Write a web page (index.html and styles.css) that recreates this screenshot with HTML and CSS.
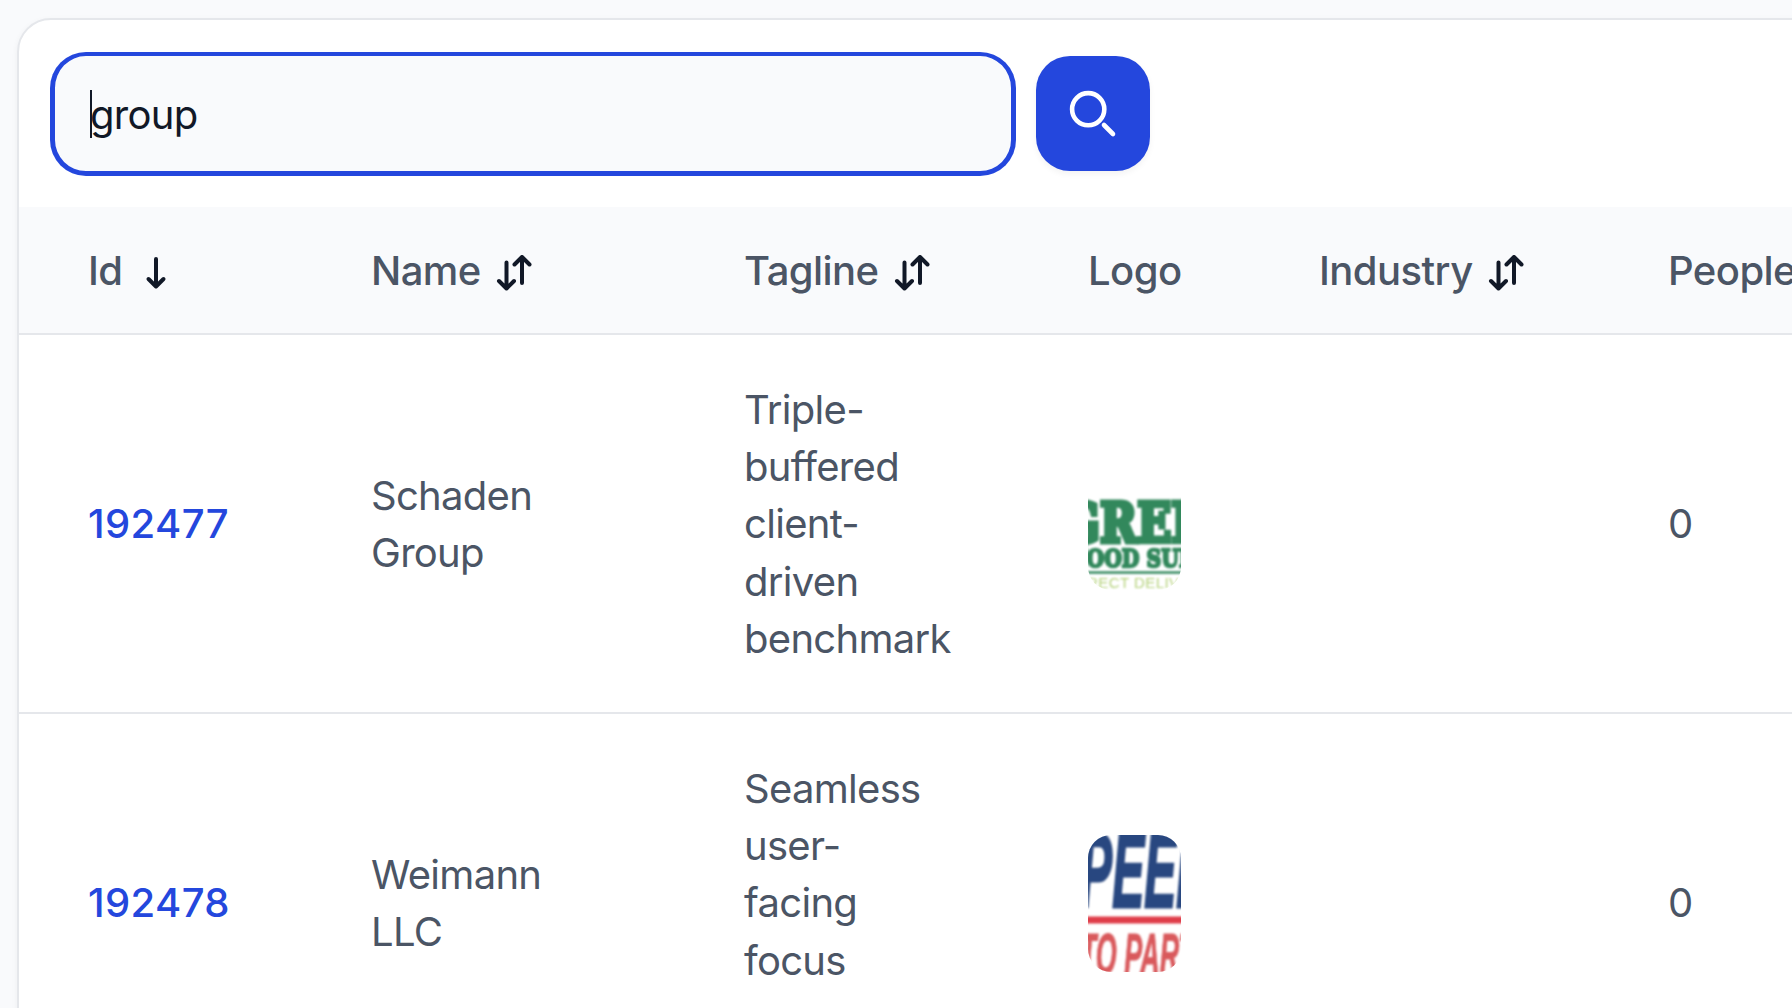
FILE: index.html
```
<!DOCTYPE html>
<html lang="en">
<head>
	<meta charset="UTF-8">
	<meta name="viewport" content="width=device-width, initial-scale=1.0">
	<title>Companies</title>
	<link rel="stylesheet" href="styles.css">
</head>
<body>
	<svg class="sprite" width="0" height="0">
		<symbol id="sort" viewBox="0 0 36 36">
			<path d="M10.500 7.500v26M3 26l7.500 7.500L18 26M26 28V2M18.500 9.500L26 2l7.500 7.500"/>
		</symbol>
		<symbol id="down" viewBox="0 0 36 36">
			<path d="M18 4v27M10.500 24l7.500 7.500 7.500-7.500"/>
		</symbol>
	</svg>

	<div class="card">
		<form class="search">
			<div class="field"><span class="caret"></span>group</div>
			<button class="search-btn" type="button" aria-label="Search">
				<svg viewBox="0 0 48 48" width="48" height="48">
					<circle cx="19.200" cy="19.200" r="16.100"/>
					<path d="M35 35l9 9"/>
				</svg>
			</button>
		</form>

		<table class="companies">
			<colgroup>
				<col class="col-id">
				<col class="col-name">
				<col class="col-tagline">
				<col class="col-logo">
				<col class="col-industry">
				<col class="col-people">
			</colgroup>
			<thead>
				<tr>
					<th><div class="head">Id <svg class="icon"><use href="#down"/></svg></div></th>
					<th><div class="head">Name <svg class="icon"><use href="#sort"/></svg></div></th>
					<th><div class="head">Tagline <svg class="icon"><use href="#sort"/></svg></div></th>
					<th><div class="head">Logo</div></th>
					<th><div class="head">Industry <svg class="icon"><use href="#sort"/></svg></div></th>
					<th><div class="head">People</div></th>
				</tr>
			</thead>
			<tbody>
				<tr>
					<td><a class="link" href="#">192477</a></td>
					<td>Schaden<br>Group</td>
					<td>Triple-<br>buffered<br>client-<br>driven<br>benchmark</td>
					<td>
						<svg class="logo" viewBox="0 0 93 132" width="93" height="132">
							<g class="green">
								<text class="slab" x="-26" y="83.500" font-size="54" textLength="184" lengthAdjust="spacingAndGlyphs">GREEN</text>
								<text class="slab small" x="-16" y="108.500" font-size="25" textLength="165" lengthAdjust="spacingAndGlyphs">FOOD SUPPLY</text>
								<path class="rule" d="M-5 114.500h103"/>
							</g>
							<text class="lime" x="-17" y="130" font-size="15" textLength="140">DIRECT DELIVERY</text>
						</svg>
					</td>
					<td></td>
					<td>0</td>
				</tr>
				<tr>
					<td><a class="link" href="#">192478</a></td>
					<td>Weimann<br>LLC</td>
					<td>Seamless<br>user-<br>facing<br>focus<br>&nbsp;</td>
					<td>
						<svg class="logo" viewBox="0 0 93 137" width="93" height="137">
							<text class="navy" x="-40" y="71.500" font-size="106" textLength="163" lengthAdjust="spacingAndGlyphs">SPEED</text>
							<path class="stripe" d="M-5 85h103"/>
							<text class="red" x="-47" y="139" font-size="57" textLength="172" lengthAdjust="spacingAndGlyphs">AUTO PARTS</text>
						</svg>
					</td>
					<td></td>
					<td>0</td>
				</tr>
			</tbody>
		</table>
	</div>
</body>
</html>
```
FILE: styles.css
```
* {
	box-sizing: border-box;
	padding: 0;
	margin: 0;
}

body {
	height: 1008px;
	overflow: hidden;
	background: #f9fafc;
	color: #4b5565;
	font-family: Inter, sans-serif;
	font-size: 40px;
	line-height: 57.200px;
	letter-spacing: -0.7px;
}

.sprite {
	position: absolute;
}

.card {
	width: 2100px;
	height: 1100px;
	margin: 18px 0 0 17px;
	border: 2px solid #e5e7eb;
	border-radius: 34px;
	background: #fff;
	box-shadow: 0 2px 6px rgba(0, 0, 0, 0.05);
	overflow: hidden;
}

.search {
	display: flex;
	align-items: center;
	gap: 22px;
	height: 187px;
	padding: 0 0 0 33px;
}

.field {
	display: flex;
	align-items: center;
	width: 962px;
	height: 120px;
	padding: 4px 0 0 35px;
	border: 2px solid #2447dd;
	border-width: 2px 3px 3px;
	border-radius: 34px;
	background: #f9fafc;
	box-shadow: 0 0 0 2px #2447dd;
	color: #111827;
}

.caret {
	width: 2px;
	height: 48px;
	margin: -3px -2px 0 0;
	background: #111827;
}

.search-btn {
	display: grid;
	place-items: center;
	width: 114px;
	height: 115px;
	border: 0;
	border-radius: 34px;
	background: #2447dd;
	box-shadow: 0 3px 6px rgba(0, 0, 0, 0.05);
}

.search-btn svg {
	fill: none;
	stroke: #fff;
	stroke-width: 4.6;
	stroke-linecap: round;
}

.companies {
	width: 2090px;
	table-layout: fixed;
	border-collapse: separate;
	border-spacing: 0;
}

.col-id { width: 283px; }
.col-name { width: 373px; }
.col-tagline { width: 344px; }
.col-logo { width: 231px; }
.col-industry { width: 349px; }

th {
	height: 128px;
	padding: 2px 0 0 69px;
	border-bottom: 2px solid #e5e7eb;
	background: #f9fafc;
	font-weight: 500;
	text-align: left;
	letter-spacing: -0.55px;
}

td {
	height: 379px;
	padding: 1px 0 0 69px;
	border-bottom: 2px solid #e5e7eb;
	vertical-align: middle;
}

.head {
	display: flex;
	align-items: center;
	gap: 15px;
}

.icon {
	width: 36px;
	height: 36px;
	margin-top: 5px;
	fill: none;
	stroke: #111827;
	stroke-width: 4;
	stroke-linecap: round;
	stroke-linejoin: round;
}

.link {
	color: #2447dd;
	font-weight: 500;
	letter-spacing: 0.4px;
	text-decoration: none;
}

.logo {
	display: block;
	border-radius: 23px;
	overflow: hidden;
	letter-spacing: 0;
}

.logo text,
.logo path {
	filter: blur(1.2px);
}

.green {
	fill: #32885c;
	stroke: #32885c;
	stroke-width: 5;
}

.slab {
	font-family: "DejaVu Serif", serif;
	font-weight: 700;
}

.small {
	stroke-width: 2.5;
}

.rule {
	stroke-width: 2.5;
}

.lime {
	fill: #b5d27c;
	font-family: "Liberation Sans", sans-serif;
}

.navy,
.red {
	font-family: "Liberation Sans", sans-serif;
	font-style: italic;
	font-weight: 700;
}

.navy {
	fill: #284780;
	stroke: #284780;
	stroke-width: 3;
}

.stripe {
	stroke: #df3d49;
	stroke-width: 7;
}

.red {
	fill: #d9595c;
	stroke: #d9595c;
}
```
